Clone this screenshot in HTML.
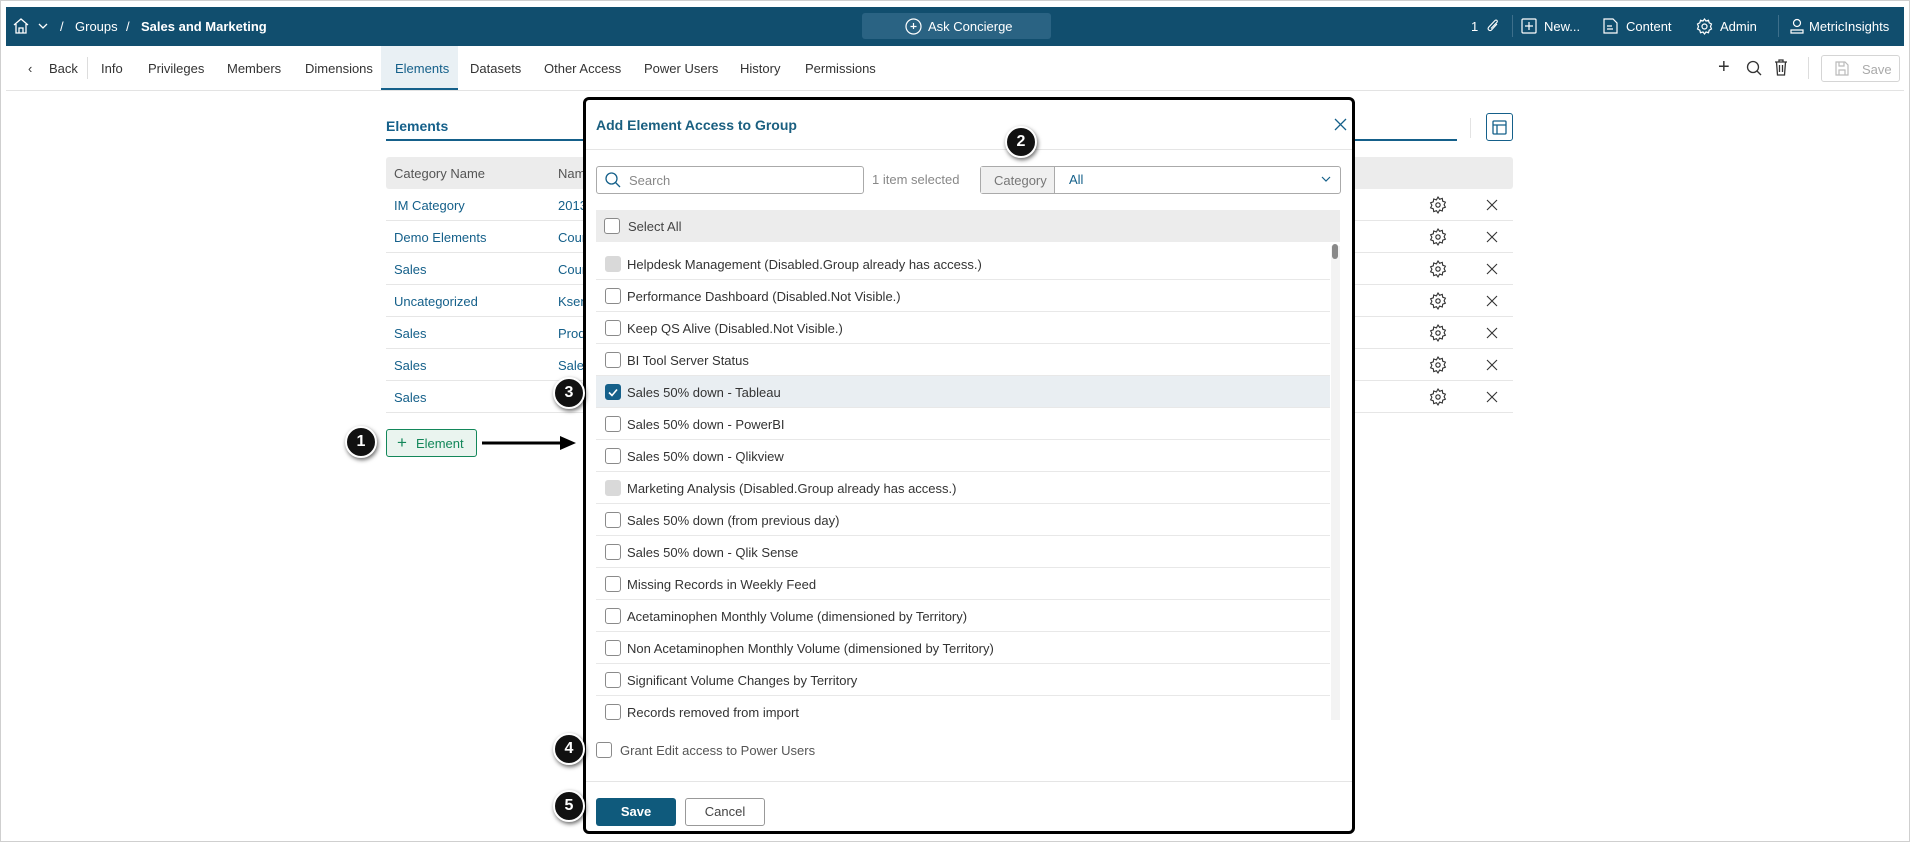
<!DOCTYPE html>
<html><head><meta charset="utf-8">
<style>
*{box-sizing:border-box;margin:0;padding:0}
body{width:1910px;height:842px;background:#fff;font-family:"Liberation Sans",sans-serif;font-size:13px;color:#333;position:relative;overflow:hidden}
.a{position:absolute}
.top{left:6px;top:7px;width:1898px;height:39px;background:#114e6e;color:#fff}
.top span{position:absolute;top:12px;font-size:13px}
.tabs span{position:absolute;top:61px;font-size:13px;color:#333}
.row{position:absolute;left:386px;width:1127px;height:32px;border-bottom:1px solid #e6e6e6}
.row .c1{position:absolute;left:8px;top:9px;color:#15608a}
.row .c2{position:absolute;left:172px;top:9px;color:#15608a}
.cb{position:absolute;width:16px;height:16px;border:1px solid #8a8a8a;border-radius:3px;background:#fff}
.cb.dis{background:#d9d9d9;border-color:#d9d9d9}
.li{position:absolute;left:596px;width:734px;height:32px;border-bottom:1px solid #e8e8e8}
.li .cb{left:9px;top:8px}
.li span{position:absolute;left:31px;top:9px;color:#333}
.badge{position:absolute;width:32px;height:32px;border-radius:50%;background:#111;border:2px solid #fff;box-shadow:1px 2px 4px rgba(0,0,0,.6);color:#fff;font-weight:bold;font-size:16px;text-align:center;line-height:28px}
</style></head><body>
<div class="a" style="left:0;top:0;width:1910px;height:842px;border:1px solid #cfcfcf"></div>
<div class="a top">
 <svg class="a" style="left:6px;top:10px" width="18" height="18" viewBox="0 0 18 18" fill="none" stroke="#fff" stroke-width="1.3"><path d="M2 8L9 2l7 6M4 7v9h10V7M7 16v-5h4v5"/></svg>
 <svg class="a" style="left:32px;top:15px" width="10" height="8" viewBox="0 0 10 8" fill="none" stroke="#fff" stroke-width="1.3"><path d="M1 2l4 4 4-4"/></svg>
 <span style="left:54px">/</span><span style="left:69px">Groups</span><span style="left:120px">/</span><span style="left:135px;font-weight:bold">Sales and Marketing</span>
 <div class="a" style="left:856px;top:6px;width:189px;height:26px;background:#2a6383;border-radius:3px"></div>
 <svg class="a" style="left:899px;top:11px" width="17" height="17" viewBox="0 0 17 17" fill="none" stroke="#fff" stroke-width="1.2"><circle cx="8.5" cy="8.5" r="7.5"/><path d="M8.5 5v6M5.5 8.5h6"/></svg>
 <span style="left:922px">Ask Concierge</span>
 <span style="left:1465px">1</span>
 <svg class="a" style="left:1480px;top:11px" width="14" height="16" viewBox="0 0 14 16" fill="none" stroke="#fff" stroke-width="1.1"><path d="M11 6l-5.5 6a2 2 0 0 1-3-2.6L9 2.5a1.3 1.3 0 0 1 2 1.7L5 10.5"/></svg>
 <div class="a" style="left:1506px;top:8px;width:1px;height:22px;background:#3d6f8b"></div>
 <svg class="a" style="left:1515px;top:11px" width="16" height="16" viewBox="0 0 16 16" fill="none" stroke="#fff" stroke-width="1.2"><rect x="1" y="1" width="14" height="14" rx="1"/><path d="M8 4v8M4 8h8"/></svg>
 <span style="left:1538px">New...</span>
 <svg class="a" style="left:1597px;top:11px" width="15" height="16" viewBox="0 0 15 16" fill="none" stroke="#fff" stroke-width="1.2"><path d="M1 1h9l4 4v10H1z M4 8h5M4 11h6"/></svg>
 <span style="left:1620px">Content</span>
 <svg class="a" style="left:1690px;top:11px" width="17" height="17" viewBox="0 0 17 17" fill="none" stroke="#fff" stroke-width="1.2"><circle cx="8.5" cy="8.5" r="2.5"/><path d="M8.5 1l1.5 2 2.5-.7.7 2.5 2.3 1.2-1 2.5 1 2.5-2.3 1.2-.7 2.5-2.5-.7-1.5 2-1.5-2-2.5.7-.7-2.5L1.5 11l1-2.5-1-2.5 2.3-1.2.7-2.5 2.5.7z"/></svg>
 <span style="left:1714px">Admin</span>
 <div class="a" style="left:1772px;top:8px;width:1px;height:22px;background:#3d6f8b"></div>
 <svg class="a" style="left:1784px;top:11px" width="14" height="16" viewBox="0 0 14 16" fill="none" stroke="#fff" stroke-width="1.2"><circle cx="7" cy="5" r="3.5"/><path d="M1 15v-3h12v3z"/></svg>
 <span style="left:1803px">MetricInsights</span>
</div>
<div class="tabs">
 <div class="a" style="left:381px;top:46px;width:77px;height:44px;background:#e9f0f4;border-bottom:2px solid #15608a"></div>
 <div class="a" style="left:6px;top:90px;width:1898px;height:1px;background:#e3e3e3"></div>
 <span style="left:28px">&lsaquo;</span><span style="left:49px">Back</span>
 <div class="a" style="left:87px;top:57px;width:1px;height:22px;background:#ddd"></div>
 <span style="left:101px">Info</span><span style="left:148px">Privileges</span><span style="left:227px">Members</span><span style="left:305px">Dimensions</span><span style="left:395px;color:#15608a">Elements</span><span style="left:470px">Datasets</span><span style="left:544px">Other Access</span><span style="left:644px">Power Users</span><span style="left:740px">History</span><span style="left:805px">Permissions</span>
 <span style="left:1718px;top:56px;font-size:20px">+</span>
 <svg class="a" style="left:1746px;top:60px" width="16" height="16" viewBox="0 0 16 16" fill="none" stroke="#333" stroke-width="1.3"><circle cx="7" cy="7" r="5.5"/><path d="M11 11l4 4"/></svg>
 <svg class="a" style="left:1774px;top:59px" width="14" height="17" viewBox="0 0 14 17" fill="none" stroke="#333" stroke-width="1.3"><path d="M1 3h12M5 3V1h4v2M2.5 3l1 13h7l1-13M5.5 6v7M8.5 6v7"/></svg>
 <div class="a" style="left:1808px;top:57px;width:1px;height:22px;background:#ddd"></div>
 <div class="a" style="left:1821px;top:55px;width:79px;height:27px;border:1px solid #d5d5d5;border-radius:3px;color:#aaa;padding:6px 0 0 40px">Save</div>
 <svg class="a" style="left:1835px;top:61px" width="14" height="15" viewBox="0 0 14 15" fill="none" stroke="#bbb" stroke-width="1.2"><path d="M1 1h9l3 3v10H1z M4 1v4h5V1M4 14V9h6v5"/></svg>
</div>
<div class="a" style="left:386px;top:118px;font-weight:bold;font-size:14px;color:#15608a">Elements</div>
<div class="a" style="left:386px;top:139px;width:1071px;height:2px;background:#15608a"></div>
<div class="a" style="left:1470px;top:118px;width:1px;height:20px;background:#e3e3e3"></div>
<div class="a" style="left:1486px;top:113px;width:27px;height:28px;border:1px solid #15608a;border-radius:3px"></div>
<svg class="a" style="left:1492px;top:120px" width="15" height="15" viewBox="0 0 15 15" fill="none" stroke="#15608a" stroke-width="1.3"><rect x="1" y="1" width="13" height="13" rx="1"/><path d="M1 5h13M5 5v9"/></svg>
<div class="a" style="left:386px;top:157px;width:1127px;height:32px;background:#ececec;border-radius:3px"></div>
<span class="a" style="left:394px;top:166px;color:#555">Category Name</span><span class="a" style="left:558px;top:166px;color:#555">Name</span>
<div class="row" style="top:189px"><span class="c1">IM Category</span><span class="c2">2013</span></div>
<div class="row" style="top:221px"><span class="c1">Demo Elements</span><span class="c2">Count</span></div>
<div class="row" style="top:253px"><span class="c1">Sales</span><span class="c2">Count</span></div>
<div class="row" style="top:285px"><span class="c1">Uncategorized</span><span class="c2">Kseni</span></div>
<div class="row" style="top:317px"><span class="c1">Sales</span><span class="c2">Prod</span></div>
<div class="row" style="top:349px"><span class="c1">Sales</span><span class="c2">Sales</span></div>
<div class="row" style="top:381px"><span class="c1">Sales</span></div>
<svg class="a" style="left:0;top:0" width="1910" height="420" fill="none" stroke="#333" stroke-width="1.1">
 <defs><g id="g"><circle cx="0" cy="0" r="2.2"/><path d="M0 -8l1.6 2.3 2.7-.9.4 2.8 2.7 1-1.3 2.5 1.3 2.5-2.7 1-.4 2.8-2.7-.9L0 8l-1.6-2.3-2.7.9-.4-2.8-2.7-1 1.3-2.5-1.3-2.5 2.7-1 .4-2.8 2.7.9z"/></g>
 <g id="x"><path d="M-5 -5L5 5M5 -5L-5 5"/></g></defs>
 <use href="#g" x="1438" y="205"/><use href="#x" x="1492" y="205"/>
 <use href="#g" x="1438" y="237"/><use href="#x" x="1492" y="237"/>
 <use href="#g" x="1438" y="269"/><use href="#x" x="1492" y="269"/>
 <use href="#g" x="1438" y="301"/><use href="#x" x="1492" y="301"/>
 <use href="#g" x="1438" y="333"/><use href="#x" x="1492" y="333"/>
 <use href="#g" x="1438" y="365"/><use href="#x" x="1492" y="365"/>
 <use href="#g" x="1438" y="397"/><use href="#x" x="1492" y="397"/>
</svg>
<div class="a" style="left:386px;top:429px;width:91px;height:28px;border:1px solid #13875a;border-radius:3px;background:#eaf4ef;color:#13875a;display:flex;align-items:center;padding-left:10px"><span style="font-size:17px;margin-right:9px">+</span>Element</div>
<svg class="a" style="left:480px;top:434px" width="100" height="18"><path d="M2 9H82" stroke="#000" stroke-width="3"/><path d="M80 2L96 9 80 16z" fill="#000"/></svg>
<div class="badge" style="left:345px;top:426px">1</div>

<div class="a" style="left:583px;top:97px;width:772px;height:737px;border:3px solid #000;border-radius:6px;background:#fff"></div>
<div class="a" style="left:596px;top:117px;font-weight:bold;font-size:14px;color:#1a5f80">Add Element Access to Group</div>
<svg class="a" style="left:1334px;top:118px" width="13" height="13" fill="none" stroke="#15608a" stroke-width="1.3"><path d="M1 1l11 11M12 1L1 12"/></svg>
<div class="a" style="left:586px;top:149px;width:766px;height:1px;background:#e5e5e5"></div>
<div class="a" style="left:596px;top:166px;width:268px;height:28px;border:1px solid #aaa;border-radius:3px"></div>
<svg class="a" style="left:605px;top:172px" width="16" height="16" fill="none" stroke="#15608a" stroke-width="1.3"><circle cx="6.5" cy="6.5" r="5.5"/><path d="M10.5 10.5l4.5 4.5"/></svg>
<span class="a" style="left:629px;top:173px;color:#888">Search</span>
<span class="a" style="left:872px;top:172px;color:#888">1 item selected</span>
<div class="a" style="left:980px;top:166px;width:361px;height:28px;border:1px solid #aaa;border-radius:3px"></div>
<div class="a" style="left:981px;top:167px;width:74px;height:26px;background:#f0f0f0;border-right:1px solid #aaa;color:#777;padding:6px 0 0 13px">Category</div>
<span class="a" style="left:1069px;top:172px;color:#15608a">All</span>
<svg class="a" style="left:1321px;top:176px" width="10" height="7" fill="none" stroke="#15608a" stroke-width="1.2"><path d="M1 1l4 4 4-4"/></svg>
<div class="a" style="left:596px;top:210px;width:744px;height:32px;background:#ececec"></div>
<div class="cb" style="left:604px;top:218px"></div><span class="a" style="left:628px;top:219px;color:#444">Select All</span>
<div class="a" style="left:596px;top:246px;width:744px;height:474px;overflow:hidden">
<div style="position:relative;left:-596px;top:-246px">
<div class="li" style="top:248px"><div class="cb dis"></div><span>Helpdesk Management (Disabled.Group already has access.)</span></div>
<div class="li" style="top:280px"><div class="cb"></div><span>Performance Dashboard (Disabled.Not Visible.)</span></div>
<div class="li" style="top:312px"><div class="cb"></div><span>Keep QS Alive (Disabled.Not Visible.)</span></div>
<div class="li" style="top:344px"><div class="cb"></div><span>BI Tool Server Status</span></div>
<div class="li" style="top:376px;background:#e9eef2"><div class="cb" style="background:#15608a;border-color:#15608a"></div><svg style="position:absolute;left:12px;top:12px" width="10" height="9" fill="none" stroke="#fff" stroke-width="1.6"><path d="M1 4.5l3 3 5-6"/></svg><span>Sales 50% down - Tableau</span></div>
<div class="li" style="top:408px"><div class="cb"></div><span>Sales 50% down - PowerBI</span></div>
<div class="li" style="top:440px"><div class="cb"></div><span>Sales 50% down - Qlikview</span></div>
<div class="li" style="top:472px"><div class="cb dis"></div><span>Marketing Analysis (Disabled.Group already has access.)</span></div>
<div class="li" style="top:504px"><div class="cb"></div><span>Sales 50% down (from previous day)</span></div>
<div class="li" style="top:536px"><div class="cb"></div><span>Sales 50% down - Qlik Sense</span></div>
<div class="li" style="top:568px"><div class="cb"></div><span>Missing Records in Weekly Feed</span></div>
<div class="li" style="top:600px"><div class="cb"></div><span>Acetaminophen Monthly Volume (dimensioned by Territory)</span></div>
<div class="li" style="top:632px"><div class="cb"></div><span>Non Acetaminophen Monthly Volume (dimensioned by Territory)</span></div>
<div class="li" style="top:664px"><div class="cb"></div><span>Significant Volume Changes by Territory</span></div>
<div class="li" style="top:696px"><div class="cb"></div><span>Records removed from import</span></div>
</div></div>
<div class="a" style="left:1331px;top:246px;width:9px;height:474px;background:#f3f3f3"></div>
<div class="a" style="left:1332px;top:244px;width:6px;height:15px;background:#888;border-radius:3px"></div>
<div class="cb" style="left:596px;top:742px"></div>
<span class="a" style="left:620px;top:743px;color:#555">Grant Edit access to Power Users</span>
<div class="a" style="left:586px;top:781px;width:766px;height:1px;background:#e5e5e5"></div>
<div class="a" style="left:596px;top:798px;width:80px;height:28px;background:#0f5a7c;border-radius:3px;color:#fff;font-weight:bold;text-align:center;line-height:28px">Save</div>
<div class="a" style="left:685px;top:798px;width:80px;height:28px;border:1px solid #999;border-radius:3px;color:#444;text-align:center;line-height:26px">Cancel</div>
<div class="badge" style="left:1005px;top:126px">2</div>
<div class="badge" style="left:553px;top:377px">3</div>
<div class="badge" style="left:553px;top:733px">4</div>
<div class="badge" style="left:553px;top:790px">5</div>
</body></html>
